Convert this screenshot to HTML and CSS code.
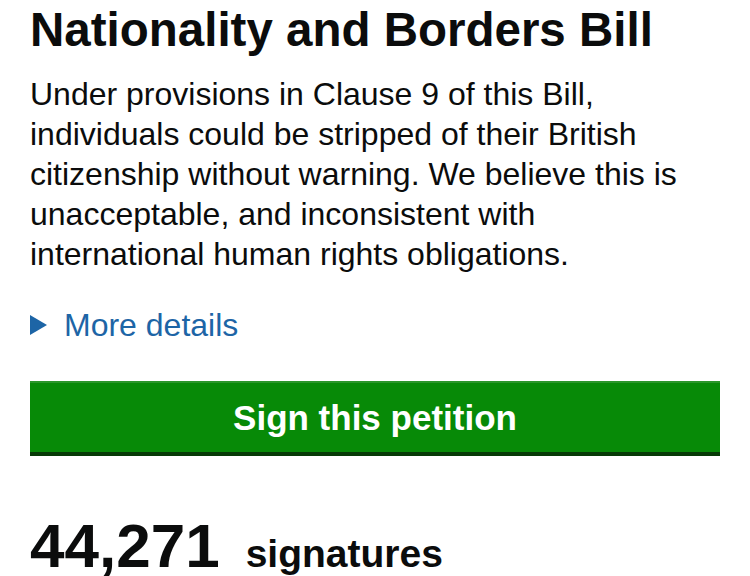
FILE: index.html
```html
<!DOCTYPE html>
<html lang="en">
<head>
<meta charset="utf-8">
<title>Nationality and Borders Bill</title>
<link rel="stylesheet" href="styles.css">
</head>
<body>
<main class="page">
  <h1 class="title">Nationality and Borders Bill</h1>
  <p class="summary">Under provisions in Clause 9 of this Bill, individuals could be stripped of their British citizenship without warning. We believe this is unacceptable, and inconsistent with international human rights obligations.</p>
  <div class="details">
    <span class="details-arrow"></span>
    <span class="details-label">More details</span>
  </div>
  <a class="button" href="#">Sign this petition</a>
  <p class="count"><span class="count-number">44,271</span><span class="count-label">signatures</span></p>
</main>
</body>
</html>
```

FILE: styles.css
```css
html, body {
  margin: 0;
  padding: 0;
  background: #ffffff;
}

body {
  font-family: "Liberation Sans", Arial, Helvetica, sans-serif;
  color: #0b0c0c;
  overflow: hidden;
}

.page {
  padding: 0 30px;
}

.title {
  margin: 0;
  padding-top: 4px;
  font-size: 47.5px;
  line-height: 52px;
  font-weight: 700;
}

.summary {
  margin: 18px 0 0;
  max-width: 670px;
  font-size: 32px;
  line-height: 40px;
}

.details {
  margin-top: 31px;
  display: flex;
  align-items: center;
  gap: 17px;
  color: #1d65a6;
  font-size: 32px;
  line-height: 40px;
}

.details-arrow {
  width: 0;
  height: 0;
  border-left: 17px solid #1d65a6;
  border-top: 10px solid transparent;
  border-bottom: 10px solid transparent;
}

.button {
  display: block;
  margin-top: 36px;
  height: 68px;
  padding-top: 3px;
  background: #078a07;
  box-shadow: 0 4px 0 #063a06, inset 0 2px 0 #2a962a;
  color: #ffffff;
  text-decoration: none;
  text-align: center;
  font-weight: 700;
  font-size: 35px;
  line-height: 68px;
}

.count {
  margin: 65px 0 0;
  display: flex;
  align-items: baseline;
  font-weight: 700;
  line-height: 58px;
}

.count-number {
  font-size: 62px;
}

.count-label {
  margin-left: 26px;
  font-size: 39px;
}
```
